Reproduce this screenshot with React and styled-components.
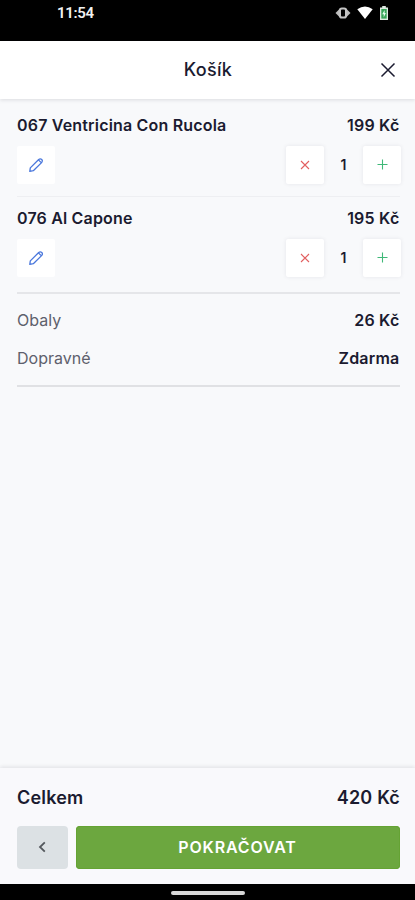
import React, { useState } from "react";
import styled, { createGlobalStyle } from "styled-components";

const initialItems = [
  { id: "067", name: "067 Ventricina Con Rucola", price: 199, count: 1 },
  { id: "076", name: "076 Al Capone", price: 195, count: 1 },
];

const PACKAGING = 26;

export default function App() {
  const [items, setItems] = useState(initialItems);

  const changeCount = (id, diff) => {
    setItems(
      items
        .map((item) =>
          item.id === id ? { ...item, count: item.count + diff } : item
        )
        .filter((item) => item.count > 0)
    );
  };

  const total = items.reduce((sum, i) => sum + i.price * i.count, PACKAGING);

  return (
    <>
      <GlobalStyle />
      <Screen>
        <StatusBar>
          <Clock>11:54</Clock>
          <StatusIcons />
        </StatusBar>
        <Header>
          <Title>Košík</Title>
          <CloseButton aria-label="Zavřít">
            <svg width="16" height="16" viewBox="0 0 16 16">
              <path d="M1.5 1.5 14.5 14.5M14.5 1.5 1.5 14.5" />
            </svg>
          </CloseButton>
        </Header>
        <Content>
          {items.map((item) => (
            <CartItem key={item.id} item={item} changeCount={changeCount} />
          ))}
          <Fees>
            <FeeRow>
              <span>Obaly</span>
              <Price>{PACKAGING} Kč</Price>
            </FeeRow>
            <FeeRow>
              <span>Dopravné</span>
              <Price>Zdarma</Price>
            </FeeRow>
          </Fees>
        </Content>
        <Footer>
          <Total>
            <span>Celkem</span>
            <span>{total} Kč</span>
          </Total>
          <Actions>
            <BackButton aria-label="Zpět">
              <svg width="8" height="12" viewBox="0 0 8 12">
                <path d="M6.800 1.300 2 6l4.800 4.700" />
              </svg>
            </BackButton>
            <ContinueButton>POKRAČOVAT</ContinueButton>
          </Actions>
        </Footer>
        <NavigationBar>
          <HomeIndicator />
        </NavigationBar>
      </Screen>
    </>
  );
}

function CartItem({ item, changeCount }) {
  return (
    <Item>
      <ItemRow>
        <ItemName>{item.name}</ItemName>
        <Price>{item.price} Kč</Price>
      </ItemRow>
      <ItemControls>
        <SquareButton $color="#4a77dc" $flat aria-label="Upravit">
          <svg width="16" height="16" viewBox="0 0 16 16">
            <path
              strokeWidth="1.3"
              strokeLinejoin="round"
              d="M1.800 14.300 2.300 10.900 10.700 2.500Q12.300 1.300 13.800 2.500 15 3.900 13.800 5.400L5.300 13.700ZM10.700 3.100l2.500 2.500"
            />
          </svg>
        </SquareButton>
        <Stepper>
          <SquareButton
            $color="#e25f60"
            aria-label="Odebrat"
            onClick={() => changeCount(item.id, -1)}
          >
            <svg width="10" height="10" viewBox="0 0 10 10">
              <path d="M1 1l8 8M9 1 1 9" />
            </svg>
          </SquareButton>
          <Count>{item.count}</Count>
          <SquareButton
            $color="#40b878"
            aria-label="Přidat"
            onClick={() => changeCount(item.id, 1)}
          >
            <svg width="12" height="11" viewBox="0 0 12 11">
              <path d="M6.500.5v10M1.500 5.500h10" />
            </svg>
          </SquareButton>
        </Stepper>
      </ItemControls>
    </Item>
  );
}

function StatusIcons() {
  return (
    <Icons>
      {/* vibrate */}
      <svg width="16" height="14" viewBox="0 0 16 14">
        <path d="M.5 7 4.500 3v8ZM15.500 7 11.500 3v8Z" fill="#bdbdbd" />
        <rect x="4.900" y="2.500" width="6.200" height="9" rx="2" fill="none" stroke="#c4c4c4" strokeWidth="2.200" />
      </svg>
      {/* wifi */}
      <svg width="16" height="14" viewBox="0 0 16 14">
        <path d="M.3 3.300Q8-2.300 15.700 3.300L8 13Z" fill="#fff" />
      </svg>
      {/* battery */}
      <svg width="10" height="14" viewBox="0 0 10 14">
        <path d="M3.200 0h3.600v1.500H9V14H1V1.500h2.200Z" fill="#dce9df" />
        <rect x="2.300" y="3" width="5.400" height="9.600" fill="#35a457" />
        <path d="M5.600 4 3.200 8.200h1.500v3.200L6.900 7H5.600Z" fill="#e6fff0" />
      </svg>
    </Icons>
  );
}

const GlobalStyle = createGlobalStyle`
  * {
    box-sizing: border-box;
  }
  body {
    margin: 0;
    background: #000;
    font-family: Inter, "Liberation Sans", sans-serif;
  }
  button {
    border: 0;
    padding: 0;
    font-family: inherit;
    cursor: pointer;
  }
`;

const Screen = styled.div`
  height: 900px;
  display: flex;
  flex-direction: column;
  overflow: hidden;
  background-color: #f8f9fb;
  color: #1b1b30;
`;

const StatusBar = styled.div`
  flex: none;
  height: 41px;
  padding: 5px 26px 0 57px;
  display: flex;
  align-items: flex-start;
  justify-content: space-between;
  background-color: #000;
`;

const Clock = styled.span`
  font-family: Roboto, sans-serif;
  font-size: 15px;
  font-weight: 600;
  line-height: 17px;
  letter-spacing: -0.35px;
  color: #f2f2f2;
`;

const Icons = styled.div`
  display: flex;
  gap: 6px;
  padding-top: 1px;
`;

const Header = styled.header`
  flex: none;
  height: 58px;
  padding: 0 17px 0 38px;
  display: flex;
  align-items: center;
  background-color: #fff;
  box-shadow: 0 1px 4px rgba(20, 20, 40, 0.13);
  z-index: 1;
`;

const Title = styled.h1`
  flex: 1;
  margin: 0;
  text-align: center;
  font-size: 18px;
  font-weight: 500;
  line-height: 24px;
  letter-spacing: 0.35px;
`;

const CloseButton = styled.button`
  width: 20px;
  height: 20px;
  display: flex;
  align-items: center;
  justify-content: center;
  background: none;
  svg {
    fill: none;
    stroke: #1b1b30;
    stroke-width: 1.5;
  }
`;

const Content = styled.main`
  flex: 1;
  padding: 5px 15px 0 17px;
`;

const Item = styled.section`
  padding: 11px 0 12px;
  border-bottom: 1px solid #eeeff2;
  &:nth-child(2) {
    padding-bottom: 15px;
    border-bottom: 2px solid #e5e6e9;
  }
`;

const ItemRow = styled.div`
  display: flex;
  justify-content: space-between;
  line-height: 20px;
`;

const ItemName = styled.span`
  font-size: 16px;
  font-weight: 600;
  letter-spacing: 0.18px;
`;

const Price = styled.span`
  margin-right: 0.5px;
  font-size: 16px;
  font-weight: 600;
  letter-spacing: 0.22px;
  color: #1b1b30;
`;

const ItemControls = styled.div`
  display: flex;
  justify-content: space-between;
  margin-top: 11px;
`;

const Stepper = styled.div`
  display: flex;
  align-items: center;
  margin-right: -1px;
`;

const SquareButton = styled.button`
  width: 38px;
  height: 38px;
  padding: 0 1px 1px 0;
  display: flex;
  align-items: center;
  justify-content: center;
  border-radius: 2px;
  background-color: #fff;
  box-shadow: ${({ $flat }) =>
    $flat ? "none" : "0 0 4px rgba(30, 30, 50, 0.09)"};
  svg {
    fill: none;
    stroke: ${({ $color }) => $color};
    stroke-width: 1.1;
  }
`;

const Count = styled.span`
  width: 39px;
  padding-bottom: 1px;
  text-align: center;
  font-size: 14px;
  font-weight: 600;
`;

const Fees = styled.section`
  padding: 7px 0 8px;
  border-bottom: 2px solid #e0e1e4;
`;

const FeeRow = styled.div`
  display: flex;
  justify-content: space-between;
  font-size: 16px;
  line-height: 38px;
  color: #5e606c;
`;

const Footer = styled.footer`
  flex: none;
  height: 116px;
  padding: 18px 15px 0 17px;
  background-color: #f9f9fc;
  box-shadow: 0 -1px 4px rgba(20, 20, 40, 0.11);
`;

const Total = styled.div`
  display: flex;
  justify-content: space-between;
  line-height: 24px;
  font-size: 18px;
  font-weight: 600;
  letter-spacing: 0.2px;
`;

const Actions = styled.div`
  display: flex;
  gap: 8px;
  margin-top: 16px;
`;

const BackButton = styled.button`
  width: 51px;
  height: 43px;
  padding: 0 1px 1px 0;
  display: flex;
  align-items: center;
  justify-content: center;
  border-radius: 4px;
  background-color: #dce1e4;
  svg {
    fill: none;
    stroke: #54585d;
    stroke-width: 1.8;
  }
`;

const ContinueButton = styled.button`
  flex: 1;
  height: 43px;
  padding: 0 1px 2px 0;
  border-radius: 4px;
  background-color: #6ca73f;
  box-shadow: inset 0 0 0 1px #65a334;
  color: #fff;
  font-size: 16px;
  font-weight: 600;
  letter-spacing: 0.85px;
`;

const NavigationBar = styled.div`
  flex: none;
  height: 16px;
  padding-top: 7px;
  background-color: #000;
`;

const HomeIndicator = styled.div`
  width: 74px;
  height: 4px;
  margin: 0 auto;
  border-radius: 2px;
  background-color: #d8d8d8;
`;
